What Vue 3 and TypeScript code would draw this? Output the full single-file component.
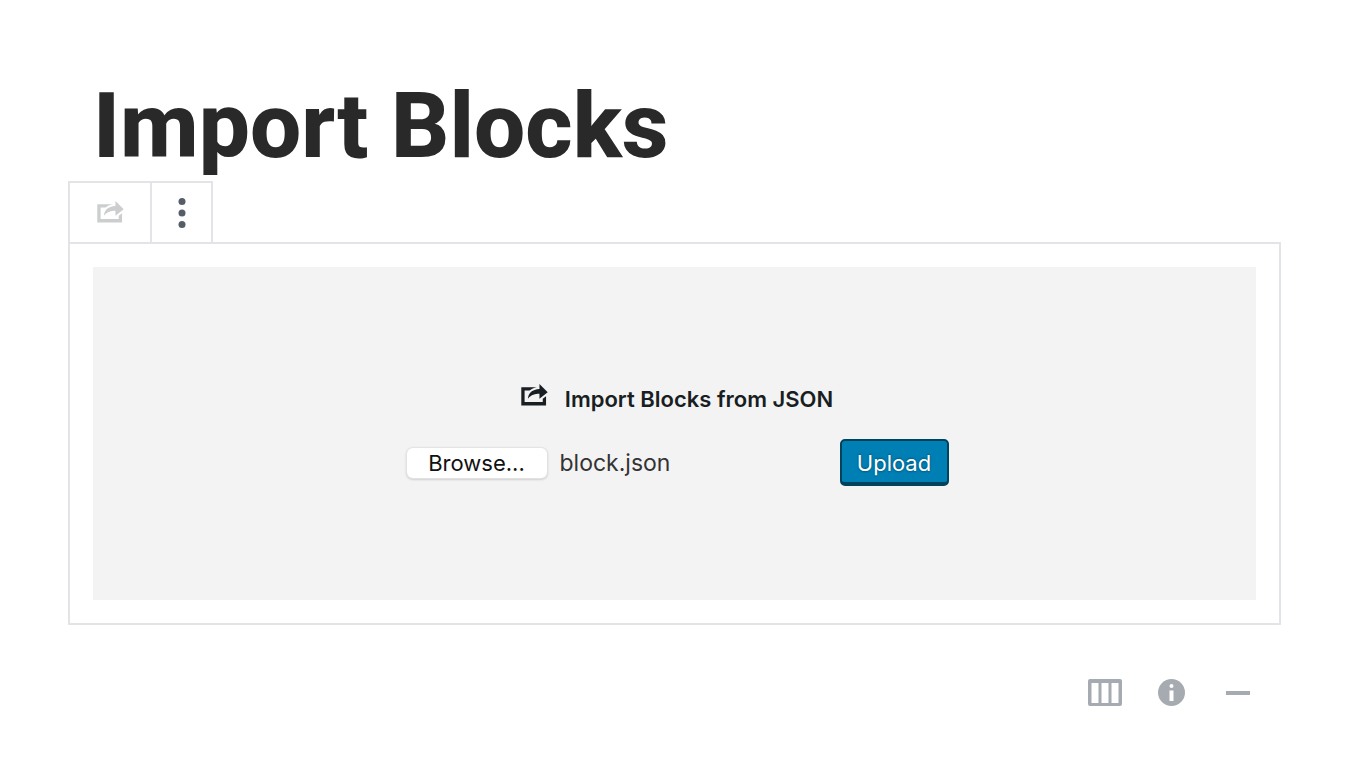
<script setup lang="ts">
import { ref } from 'vue'

const title = 'Import Blocks'
const picker = ref<HTMLInputElement | null>(null)
const fileName = ref<string>('block.json')

const sharePath =
  'M18 8l-5 4V9.01c-2.58.06-4.88.45-7 2.99.29-3.57 2.66-5.66 7-5.94V3zM4 14h11v-2l2-1.6V16H2V5h9.43c-1.83.32-3.31 1-4.41 2H4v7z'

function browse(): void {
  picker.value?.click()
}

function onPick(event: Event): void {
  const files = (event.target as HTMLInputElement).files
  if (files && files.length > 0) fileName.value = files[0].name
}
</script>

<template>
  <main class="page">
    <h1 class="title">{{ title }}</h1>

    <div class="toolbar" role="toolbar" aria-label="Block tools">
      <button type="button" class="tool tool-type" aria-label="Change block type" disabled>
        <svg class="share" viewBox="0 0 20 20" aria-hidden="true"><path :d="sharePath" /></svg>
      </button>
      <button type="button" class="tool tool-more" aria-label="More options">
        <svg class="dots" viewBox="0 0 8 32" aria-hidden="true">
          <circle cx="4" cy="4.500" r="3.500" />
          <circle cx="4" cy="16" r="3.500" />
          <circle cx="4" cy="27.500" r="3.500" />
        </svg>
      </button>
    </div>

    <section class="block">
      <div class="placeholder">
        <h2 class="label">
          <svg class="share" viewBox="0 0 20 20" aria-hidden="true"><path :d="sharePath" /></svg>
          <span>Import Blocks from JSON</span>
        </h2>
        <form class="form" @submit.prevent>
          <input ref="picker" type="file" accept=".json" hidden aria-label="JSON file" @change="onPick" />
          <button type="button" class="browse" @click="browse">Browse...</button>
          <span class="file">{{ fileName }}</span>
          <button type="submit" class="upload">Upload</button>
        </form>
      </div>
    </section>

    <footer class="actions">
      <button type="button" class="action" aria-label="Columns">
        <svg class="columns" viewBox="0 0 34 27" aria-hidden="true">
          <path
            fill-rule="evenodd"
            d="M2 0h30a2 2 0 0 1 2 2v23a2 2 0 0 1-2 2H2a2 2 0 0 1-2-2V2a2 2 0 0 1 2-2zM3.500 4v20h7V4zM13.500 4v20h7V4zM23.500 4v20h7V4z"
          />
        </svg>
      </button>
      <button type="button" class="action" aria-label="Information">
        <svg class="info" viewBox="0 0 27 27" aria-hidden="true">
          <circle cx="13.500" cy="13.500" r="13.500" />
          <circle class="cut" cx="13.500" cy="7" r="2" />
          <rect class="cut" x="11.500" y="11.500" width="4" height="10.500" />
        </svg>
      </button>
      <button type="button" class="action" aria-label="Separator">
        <svg class="minus" viewBox="0 0 24 4" aria-hidden="true"><rect width="24" height="4" /></svg>
      </button>
    </footer>
  </main>
</template>

<style>
body {
  margin: 0;
  background: #fff;
}
</style>

<style scoped>
.page {
  box-sizing: border-box;
  padding: 72px 85px 24px 68px;
  font-family: Inter, "Liberation Sans", sans-serif;
  color: #191e23;
}

button {
  margin: 0;
  font: inherit;
  cursor: pointer;
}

svg {
  display: block;
  fill: currentColor;
}

.title {
  margin: 0;
  padding-left: 25px;
  font: 800 91px/109px Roboto, sans-serif;
  color: #292929;
}

.toolbar {
  display: inline-flex;
  vertical-align: top;
  border: 2px solid #e2e4e7;
  border-bottom: 0;
}

.tool {
  display: flex;
  align-items: center;
  justify-content: center;
  height: 59px;
  padding: 0;
  border: 0;
  background: none;
}

.tool-type {
  width: 80px;
  color: #cbcdcf;
}

.tool-more {
  width: 61px;
  border-left: 2px solid #e2e4e7;
  color: #555d66;
}

.share {
  width: 33px;
  height: 33px;
}

.dots {
  width: 8px;
  height: 32px;
}

.block {
  padding: 23px;
  border: 2px solid #e2e4e7;
}

.placeholder {
  box-sizing: border-box;
  display: flex;
  flex-direction: column;
  align-items: center;
  justify-content: center;
  gap: 20px;
  min-height: 333px;
  padding-bottom: 2px;
  background: #f3f3f3;
}

.label {
  display: flex;
  gap: 14px;
  margin: 0;
  padding-left: 2px;
  font-size: 22px;
  font-weight: 600;
  line-height: 40px;
}

.form {
  display: flex;
  align-items: center;
  padding-left: 6px;
  font-size: 22px;
  line-height: 30px;
}

.browse {
  width: 140px;
  padding: 0;
  border: 0;
  border-radius: 6px;
  background: #fff;
  box-shadow: 0 0 1px 1px #e4e4e4, 0 1px 2px 1px #cfcfcf;
  color: #111;
}

.file {
  width: 280px;
  margin-left: 13px;
  font-size: 23px;
  color: #333;
}

.upload {
  width: 109px;
  height: 47px;
  padding: 3px 0 0;
  border: 2px solid #00435d;
  border-bottom-width: 4px;
  border-radius: 5px;
  background: #007fb4;
  color: #fff;
  text-shadow: 0 -1px 2px #005d82, 0 1px 2px #005d82;
}

.actions {
  display: flex;
  align-items: center;
  justify-content: flex-end;
  gap: 36px;
  margin-top: 54px;
  padding-right: 31px;
}

.action {
  padding: 0;
  border: 0;
  background: none;
  color: #a6abb2;
}

.columns {
  width: 34px;
  height: 27px;
}

.info {
  width: 27px;
  height: 27px;
}

.minus {
  width: 24px;
  height: 4px;
  margin-left: 5px;
}

.cut {
  fill: #fff;
}
</style>
